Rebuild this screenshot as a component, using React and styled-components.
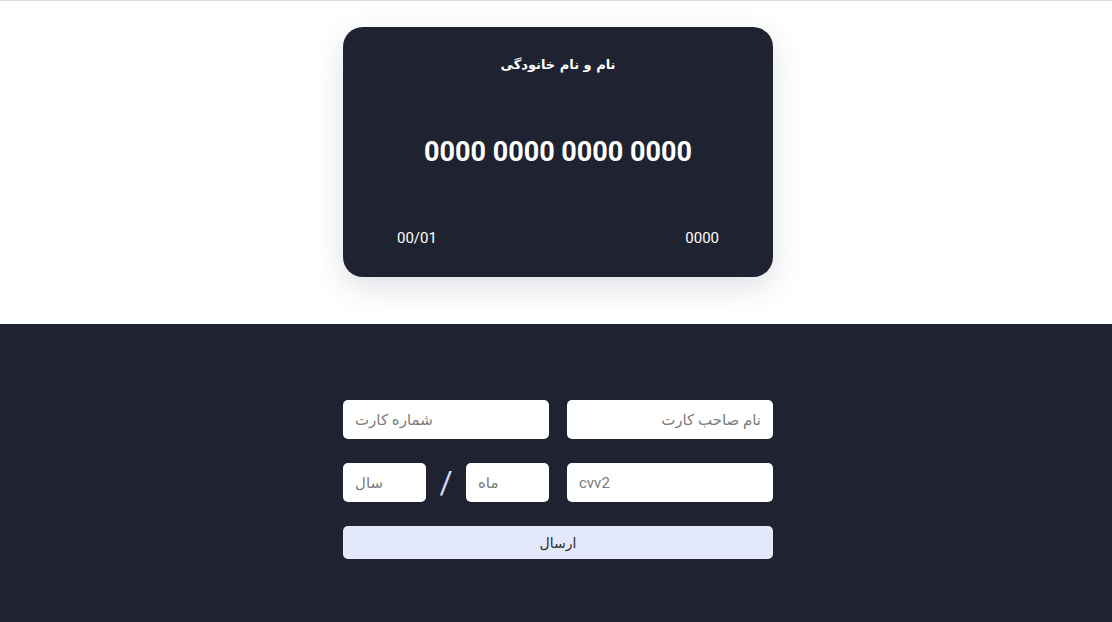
import React from 'react';
import styled, { createGlobalStyle } from 'styled-components';

const GlobalStyle = createGlobalStyle`
  html, body {
    margin: 0;
    padding: 0;
    background: #ffffff;
    font-family: Roboto, "DejaVu Sans", sans-serif;
  }
  * { box-sizing: border-box; }
`;

const Page = styled.div`
  display: flex;
  flex-direction: column;
  min-height: 622px;
  border-top: 1px solid #dcdcdc;
`;

const Top = styled.div`
  display: flex;
  justify-content: center;
  padding: 26px 0 47px 4px;
  background: #ffffff;
`;

const Card = styled.div`
  width: 430px;
  height: 250px;
  background: #1f2230;
  border-radius: 20px;
  box-shadow: 0 10px 30px rgba(40, 45, 80, 0.15);
  color: #ffffff;
  display: flex;
  flex-direction: column;
  align-items: center;
  padding: 28px 54px 29px;
`;

const Holder = styled.div`
  direction: rtl;
  font-family: "DejaVu Sans", sans-serif;
  font-weight: bold;
  font-size: 13px;
  line-height: 20px;
`;

const Number = styled.div`
  margin-top: 60px;
  font-family: Roboto, sans-serif;
  font-weight: 700;
  font-size: 27px;
  line-height: 34px;
`;

const CardFoot = styled.div`
  margin-top: auto;
  width: 100%;
  display: flex;
  justify-content: space-between;
  font-family: Roboto, sans-serif;
  font-size: 15px;
  line-height: 20px;
`;

const Bottom = styled.div`
  flex: 1;
  background: #1f2230;
  display: flex;
  justify-content: center;
  padding: 76px 0 60px 4px;
`;

const Form = styled.form`
  width: 430px;
  display: flex;
  flex-direction: column;
  gap: 24px;
  direction: rtl;
`;

const Row = styled.div`
  display: grid;
  grid-template-columns: 1fr 1fr;
  gap: 18px;
`;

const DateGroup = styled.div`
  display: flex;
  align-items: center;
  justify-content: space-between;
`;

const Input = styled.input`
  width: ${p => (p.small ? '83px' : '100%')};
  min-width: 0;
  height: 39px;
  border: none;
  border-radius: 5px;
  background: #ffffff;
  padding: 0 12px;
  font-family: Roboto, "DejaVu Sans", sans-serif;
  font-size: 15px;
  color: #333;
  direction: ${p => (p.rtl ? 'rtl' : 'ltr')};
  text-align: ${p => (p.rtl ? 'right' : 'left')};
  outline: none;

  &::placeholder {
    color: #7a7a7a;
  }
`;

const Slash = styled.span`
  color: #d2d6f2;
  font-family: Roboto, sans-serif;
  font-weight: 400;
  font-size: 32px;
  line-height: 39px;
`;

const Submit = styled.button`
  height: 33px;
  border: none;
  border-radius: 5px;
  background: #e4e8fb;
  color: #2a2a2a;
  font-family: "DejaVu Sans", sans-serif;
  font-size: 14px;
  cursor: pointer;
`;

export default function App() {
  return (
    <Page>
      <GlobalStyle />
      <Top>
        <Card>
          <Holder>نام و نام خانودگی</Holder>
          <Number>0000 0000 0000 0000</Number>
          <CardFoot>
            <span>00/01</span>
            <span>0000</span>
          </CardFoot>
        </Card>
      </Top>
      <Bottom>
        <Form onSubmit={e => e.preventDefault()}>
          <Row>
            <Input rtl placeholder="نام صاحب کارت" />
            <Input placeholder="شماره کارت" />
          </Row>
          <Row>
            <Input placeholder="cvv2" />
            <DateGroup>
              <Input small placeholder="ماه" />
              <Slash>/</Slash>
              <Input small placeholder="سال" />
            </DateGroup>
          </Row>
          <Submit type="submit">ارسال</Submit>
        </Form>
      </Bottom>
    </Page>
  );
}
